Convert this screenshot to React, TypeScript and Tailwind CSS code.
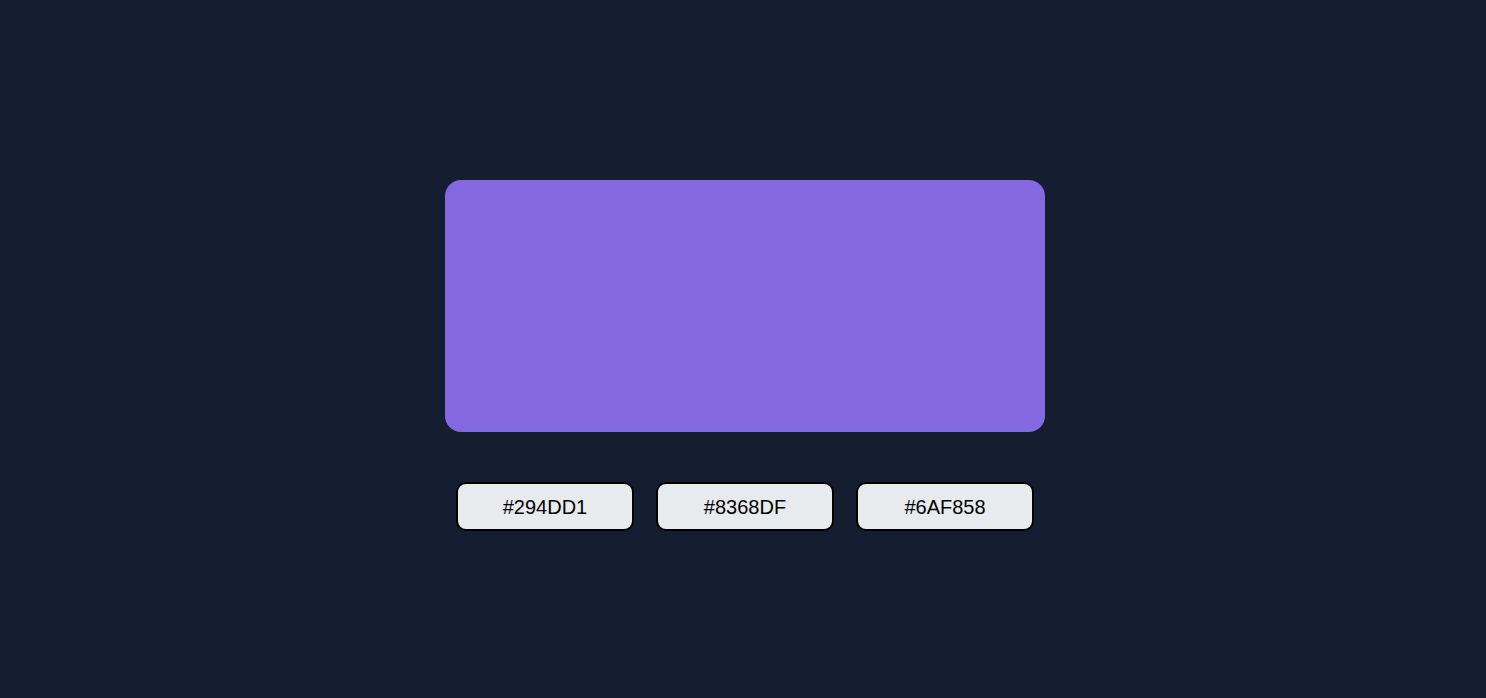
const colors = ["#294DD1", "#8368DF", "#6AF858"];

export default function App() {
  return (
    <div className="min-h-screen bg-[#151d30] pt-[180px] pl-1 font-['Liberation_Sans',Arial,sans-serif]">
      <div className="flex flex-col items-center">
        {/* current colour */}
        <div className="w-[600px] h-[252px] rounded-2xl bg-[#8368DF]" />

        {/* palette buttons */}
        <div className="mt-[50px] flex gap-[22px]">
          {colors.map((c) => (
            <button
              key={c}
              className="w-[178px] h-[49px] rounded-[10px] border-2 border-black bg-[#e8ebee] text-[20px] text-black"
            >
              {c}
            </button>
          ))}
        </div>
      </div>
    </div>
  );
}
